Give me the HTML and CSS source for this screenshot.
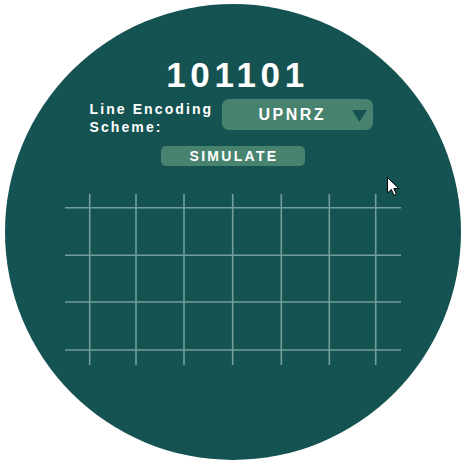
FILE: index.html
```html
<!DOCTYPE html>
<html>
<head>
<meta charset="utf-8">
<link rel="stylesheet" href="styles.css">
</head>
<body>
<div class="scope">
  <div class="title">101101</div>
  <div class="row">
    <div class="label">Line Encoding<br>Scheme:</div>
    <div class="select">
      <span class="select-text">UPNRZ</span>
      <svg class="arrow" width="15" height="12" viewBox="0 0 15 12"><polygon points="0,0 15,0 7.5,12" fill="#155352"/></svg>
    </div>
  </div>
  <div class="btn">SIMULATE</div>
  <svg class="grid" width="336" height="171" viewBox="0 0 336 171">
    <g stroke="#729f99" stroke-width="1.6">
      <line x1="0" y1="13.7" x2="336" y2="13.7"/>
      <line x1="0" y1="61.3" x2="336" y2="61.3"/>
      <line x1="0" y1="108" x2="336" y2="108"/>
      <line x1="0" y1="156" x2="336" y2="156"/>
      <line x1="24.7" y1="0" x2="24.7" y2="171"/>
      <line x1="71" y1="0" x2="71" y2="171"/>
      <line x1="119" y1="0" x2="119" y2="171"/>
      <line x1="167.7" y1="0" x2="167.7" y2="171"/>
      <line x1="216.3" y1="0" x2="216.3" y2="171"/>
      <line x1="264.3" y1="0" x2="264.3" y2="171"/>
      <line x1="310.7" y1="0" x2="310.7" y2="171"/>
    </g>
  </svg>
  <svg class="cursor" width="13" height="19" viewBox="0 0 13 19">
    <path d="M0.5,0.5 L0.5,16 L4.3,12.4 L7,18.3 L9.4,17.2 L6.8,11.5 L11.8,11.5 Z" fill="#fff" stroke="#000" stroke-width="1" stroke-linejoin="miter"/>
  </svg>
</div>
</body>
</html>
```

FILE: styles.css
```css
html, body {
  margin: 0;
  padding: 0;
  background: #ffffff;
}
body {
  width: 467px;
  height: 467px;
  overflow: hidden;
  font-family: "Liberation Sans", Arial, sans-serif;
}
.scope {
  position: relative;
  box-sizing: border-box;
  width: 456px;
  height: 456px;
  margin: 4px 0 0 5px;
  border-radius: 50%;
  background: #155352;
  display: flex;
  flex-direction: column;
  align-items: center;
  padding-top: 53px;
  color: #ffffff;
}
.title {
  font-size: 35px;
  font-weight: bold;
  line-height: 35px;
  letter-spacing: 4.6px;
  padding-left: 9px;
}
.row {
  display: flex;
  align-items: flex-start;
  gap: 8px;
  margin-top: 7px;
  margin-right: 4px;
}
.label {
  font-size: 14px;
  font-weight: bold;
  line-height: 18px;
  letter-spacing: 2.1px;
  margin-top: 1px;
  width: 124px;
  white-space: nowrap;
}
.select {
  box-sizing: border-box;
  width: 151px;
  height: 31px;
  border-radius: 7px;
  background: #47836f;
  display: flex;
  align-items: center;
  padding-left: 37px;
  padding-right: 6px;
}
.select-text {
  font-size: 16px;
  font-weight: bold;
  letter-spacing: 2.5px;
  line-height: 20px;
}
.arrow {
  margin-left: auto;
  margin-top: 3px;
  display: block;
}
.btn {
  box-sizing: border-box;
  width: 144px;
  height: 20px;
  border-radius: 5px;
  background: #47836f;
  margin-top: 10px;
  font-size: 14px;
  font-weight: bold;
  line-height: 20px;
  letter-spacing: 2.3px;
  text-align: center;
  padding-left: 2px;
}
.grid {
  display: block;
  margin-top: 28px;
}
.cursor {
  position: absolute;
  left: 382px;
  top: 173px;
}
```
